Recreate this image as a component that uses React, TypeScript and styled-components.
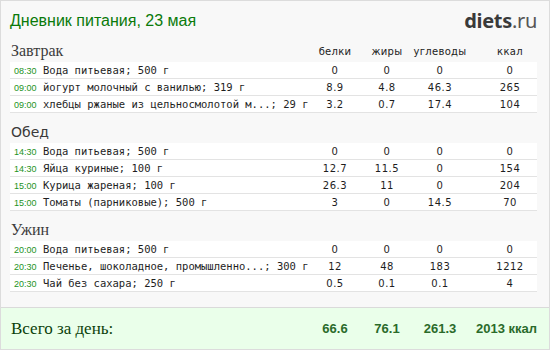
import React from "react";
import styled, { createGlobalStyle } from "styled-components";

const Global = createGlobalStyle`
  html, body { margin: 0; padding: 0; background: #f8f8f8; }
  * { box-sizing: border-box; }
`;

const Page = styled.div`
  width: 550px;
  height: 350px;
  border: 1px solid #dcdcdc;
  background: #f8f8f8;
  display: flex;
  flex-direction: column;
  overflow: hidden;
`;

const Top = styled.header`
  height: 39px;
  padding: 0 12px 0 9px;
  display: flex;
  align-items: center;
  justify-content: space-between;
`;

const Title = styled.h1`
  margin: 0;
  font-family: "Liberation Sans", Arial, sans-serif;
  font-weight: 400;
  font-size: 16px;
  color: #0a7a0a;
`;

const Logo = styled.div`
  font-family: "Noto Sans", "Open Sans", sans-serif;
  font-size: 20px;
  color: #444;
  letter-spacing: -0.3px;
  b { font-weight: 700; color: #3a3a3a; }
  span { font-weight: 400; color: #555; }
`;

const Body = styled.main`
  flex: 1;
  padding: 0 12px 0 9px;
  display: flex;
  flex-direction: column;
`;

const Section = styled.section<{ $first?: boolean }>`
  margin-top: ${(p) => (p.$first ? "0" : "8px")};
`;

const Grid = styled.div`
  display: grid;
  grid-template-columns: 1fr 52px 52px 54px 70px;
  align-items: center;
`;

const HeadRow = styled(Grid)`
  height: 22px;
  align-items: end;
  padding-bottom: 2px;
`;

const MealName = styled.div<{ $sans?: boolean }>`
  font-family: ${(p) => (p.$sans ? '"DejaVu Sans", sans-serif' : '"Liberation Serif", serif')};
  font-size: ${(p) => (p.$sans ? "14px" : "16px")};
  color: ${(p) => (p.$sans ? "#3a3a3a" : "#3c3c3c")};
  padding-left: 1px;
  line-height: 18px;
`;

const ColHead = styled.div<{ $pad?: boolean }>`
  font-family: "DejaVu Sans", sans-serif;
  font-size: 10px;
  letter-spacing: 0.3px;
  color: #222;
  text-align: center;
  padding-left: ${(p) => (p.$pad ? "16px" : "0")};
  line-height: 12px;
  padding-bottom: 2px;
`;

const Row = styled(Grid)`
  height: 17px;
  background: #fff;
  border-bottom: 1px solid #e3e3e3;
`;

const Name = styled.div`
  display: flex;
  align-items: baseline;
  white-space: nowrap;
  overflow: visible;
  padding-left: 4px;
`;

const Time = styled.span`
  font-family: "Liberation Sans", sans-serif;
  font-size: 9px;
  color: #1d931d;
  width: 29px;
  flex: none;
`;

const Food = styled.span`
  font-family: "DejaVu Sans Mono", monospace;
  font-size: 10.5px;
  color: #1e1e1e;
`;

const Num = styled.div<{ $pad?: boolean }>`
  font-family: "DejaVu Sans", sans-serif;
  font-size: 10px;
  letter-spacing: 0.5px;
  color: #1e1e1e;
  text-align: center;
  padding-left: ${(p) => (p.$pad ? "16px" : "0")};
`;

const Footer = styled.footer`
  height: 42px;
  margin-top: 15px;
  border-top: 1px solid #dadada;
  background: #eaffea;
  padding: 0 12px 0 9px;
`;

const FooterGrid = styled(Grid)`
  height: 100%;
`;

const TotalLabel = styled.div`
  font-family: "Liberation Serif", serif;
  font-size: 17px;
  color: #0b3f0b;
  padding-left: 1px;
`;

const Total = styled.div<{ $right?: boolean }>`
  font-family: "Liberation Sans", sans-serif;
  font-weight: 700;
  font-size: 13px;
  color: #2a6b2a;
  text-align: ${(p) => (p.$right ? "right" : "center")};
  white-space: nowrap;
`;

type Item = { t: string; name: string; b: string; f: string; c: string; k: string };
type Meal = { title: string; sans?: boolean; items: Item[] };

const meals: Meal[] = [
  {
    title: "Завтрак",
    items: [
      { t: "08:30", name: "Вода питьевая; 500 г", b: "0", f: "0", c: "0", k: "0" },
      { t: "09:00", name: "йогурт молочный с ванилью; 319 г", b: "8.9", f: "4.8", c: "46.3", k: "265" },
      { t: "09:00", name: "хлебцы ржаные из цельносмолотой м...; 29 г", b: "3.2", f: "0.7", c: "17.4", k: "104" },
    ],
  },
  {
    title: "Обед",
    sans: true,
    items: [
      { t: "14:30", name: "Вода питьевая; 500 г", b: "0", f: "0", c: "0", k: "0" },
      { t: "14:30", name: "Яйца куриные; 100 г", b: "12.7", f: "11.5", c: "0", k: "154" },
      { t: "15:00", name: "Курица жареная; 100 г", b: "26.3", f: "11", c: "0", k: "204" },
      { t: "15:00", name: "Томаты (парниковые); 500 г", b: "3", f: "0", c: "14.5", k: "70" },
    ],
  },
  {
    title: "Ужин",
    items: [
      { t: "20:00", name: "Вода питьевая; 500 г", b: "0", f: "0", c: "0", k: "0" },
      { t: "20:30", name: "Печенье, шоколадное, промышленно...; 300 г", b: "12", f: "48", c: "183", k: "1212" },
      { t: "20:30", name: "Чай без сахара; 250 г", b: "0.5", f: "0.1", c: "0.1", k: "4" },
    ],
  },
];

export default function App() {
  return (
    <>
      <Global />
      <Page>
        <Top>
          <Title>Дневник питания, 23 мая</Title>
          <Logo>
            <b>diets</b>
            <span>.ru</span>
          </Logo>
        </Top>
        <Body>
          {meals.map((m, i) => (
            <Section key={m.title} $first={i === 0}>
              <HeadRow>
                <MealName $sans={m.sans}>{m.title}</MealName>
                {i === 0 ? (
                  <>
                    <ColHead>белки</ColHead>
                    <ColHead>жиры</ColHead>
                    <ColHead>углеводы</ColHead>
                    <ColHead $pad>ккал</ColHead>
                  </>
                ) : null}
              </HeadRow>
              {m.items.map((it, j) => (
                <Row key={j}>
                  <Name>
                    <Time>{it.t}</Time>
                    <Food>{it.name}</Food>
                  </Name>
                  <Num>{it.b}</Num>
                  <Num>{it.f}</Num>
                  <Num>{it.c}</Num>
                  <Num $pad>{it.k}</Num>
                </Row>
              ))}
            </Section>
          ))}
        </Body>
        <Footer>
          <FooterGrid>
            <TotalLabel>Всего за день:</TotalLabel>
            <Total>66.6</Total>
            <Total>76.1</Total>
            <Total>261.3</Total>
            <Total $right>2013 ккал</Total>
          </FooterGrid>
        </Footer>
      </Page>
    </>
  );
}
